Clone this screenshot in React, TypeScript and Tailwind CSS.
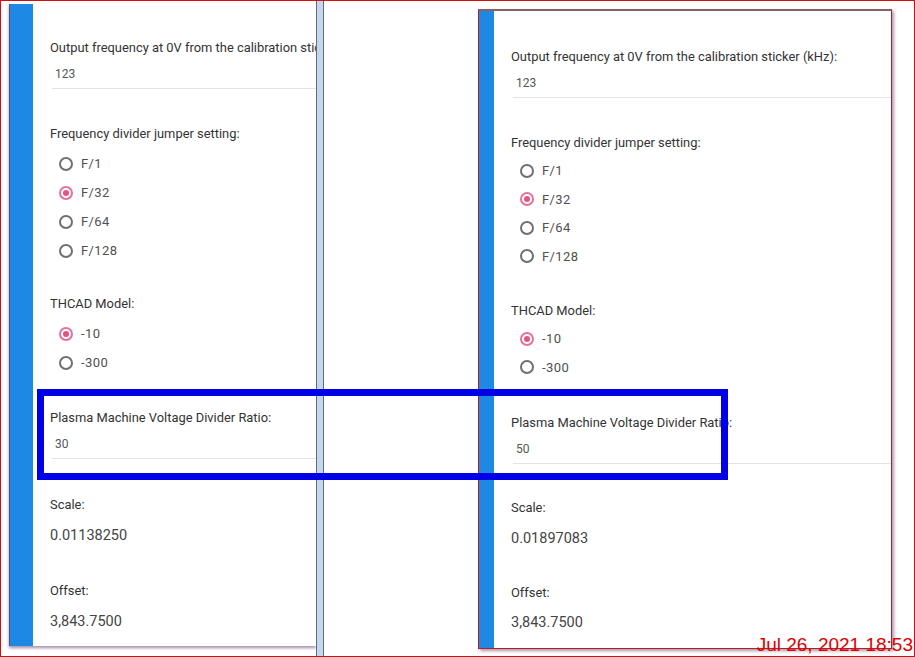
import React from 'react'

interface Spacing {
  pt: string
  r1: string
  row: string
  thcad: string
  plasma: string
  scale: string
  scaleVal: string
  offset: string
  offsetVal: string
}

const LEFT: Spacing = {
  pt: 'pt-[36px]',
  r1: 'mt-[7px]',
  row: 'h-[29px]',
  thcad: 'mt-[31px]',
  plasma: 'mt-[33px]',
  scale: 'mt-[38px]',
  scaleVal: 'mt-[14px]',
  offset: 'mt-[38px]',
  offsetVal: 'mt-[14px]',
}

const RIGHT: Spacing = {
  pt: 'pt-[38px]',
  r1: 'mt-[5.5px]',
  row: 'h-[28.5px]',
  thcad: 'mt-[32.5px]',
  plasma: 'mt-[33.5px]',
  scale: 'mt-[36px]',
  scaleVal: 'mt-[14px]',
  offset: 'mt-[37px]',
  offsetVal: 'mt-[13px]',
}

function Label({ children, className = '' }: { children: React.ReactNode; className?: string }) {
  return (
    <p className={`text-[12.9px] leading-[16px] text-[#333] whitespace-nowrap ${className}`}>{children}</p>
  )
}

function TextField({ value }: { value: string }) {
  return (
    <div className="mt-[10px] ml-[2px] pb-[6px] border-b border-[#e4e4e4]">
      <span className="block pl-[3px] text-[12px] leading-[16px] text-[#555]">{value}</span>
    </div>
  )
}

function Radio({ label, checked, row }: { label: string; checked?: boolean; row: string }) {
  return (
    <div className={`${row} flex items-center pl-[9px] gap-[8px]`}>
      <span
        className={`w-[14px] h-[14px] rounded-full border-2 flex items-center justify-center ${
          checked ? 'border-[#ea6f9f]' : 'border-[#707070]'
        }`}
      >
        {checked && <span className="w-[6px] h-[6px] rounded-full bg-[#e2557f]" />}
      </span>
      <span className="text-[13px] text-[#505050] tracking-[0.4px]">{label}</span>
    </div>
  )
}

function SettingsCard({ sp, ratio, scale, bar }: { sp: Spacing; ratio: string; scale: string; bar: string }) {
  const dividers = ['F/1', 'F/32', 'F/64', 'F/128']
  return (
    <div className="flex h-full bg-white">
      <div className={`${bar} bg-[#1e88e5] shrink-0`} />
      <div className={`flex-1 min-w-0 pl-[17px] ${sp.pt}`}>
        <Label>Output frequency at 0V from the calibration sticker (kHz):</Label>
        <TextField value="123" />

        <Label className="mt-[37px]">Frequency divider jumper setting:</Label>
        <div className={sp.r1}>
          {dividers.map(d => (
            <Radio key={d} label={d} checked={d === 'F/32'} row={sp.row} />
          ))}
        </div>

        <Label className={sp.thcad}>THCAD Model:</Label>
        <div className={sp.r1}>
          <Radio label="-10" checked row={sp.row} />
          <Radio label="-300" row={sp.row} />
        </div>

        <Label className={sp.plasma}>Plasma Machine Voltage Divider Ratio:</Label>
        <TextField value={ratio} />

        <Label className={sp.scale}>Scale:</Label>
        <p className={`${sp.scaleVal} text-[14.5px] leading-[18px] text-[#444]`}>{scale}</p>

        <Label className={sp.offset}>Offset:</Label>
        <p className={`${sp.offsetVal} text-[14.5px] leading-[18px] text-[#444]`}>3,843.7500</p>
      </div>
    </div>
  )
}

export default function App() {
  return (
    <div
      className="relative w-[915px] h-[657px] overflow-hidden bg-white border border-[#d01010]"
      style={{ fontFamily: 'Roboto, "Noto Sans", sans-serif' }}
    >
      <div className="flex h-full">
        {/* left screenshot, cut by the window edge */}
        <div className="w-[315px] shrink-0 pl-[8px] pt-[3px]">
          <div className="h-[642px] border-l border-[#6a4a70] overflow-hidden shadow-[0_2px_3px_rgba(90,50,100,0.55)]">
            <div className="w-[480px] h-full">
              <SettingsCard sp={LEFT} ratio="30" scale="0.01138250" bar="w-[23px]" />
            </div>
          </div>
        </div>

        {/* window edge */}
        <div className="w-[8px] shrink-0 bg-[#c3d6ee] border-l border-r border-[#5d6d85]" />

        {/* right screenshot */}
        <div className="w-[154px] shrink-0" />
        <div className="pt-[8px]">
          <div className="w-[414px] h-[640px] border border-[#c01a1a] border-t-2 border-t-[#8a6060] shadow-[2px_2px_3px_rgba(90,50,100,0.5)]">
            <SettingsCard sp={RIGHT} ratio="50" scale="0.01897083" bar="w-[15px]" />
          </div>
        </div>
      </div>

      {/* highlight box */}
      <div className="absolute left-[36px] top-[388px] w-[691px] h-[91px] border-[7px] border-[#0000e6]" />

      {/* timestamp */}
      <span
        className="absolute right-[1px] bottom-[1px] text-[19px] leading-[20px] text-[#e00000]"
        style={{ fontFamily: '"Liberation Sans", Arial, sans-serif' }}
      >
        Jul 26, 2021 18:53
      </span>
    </div>
  )
}
